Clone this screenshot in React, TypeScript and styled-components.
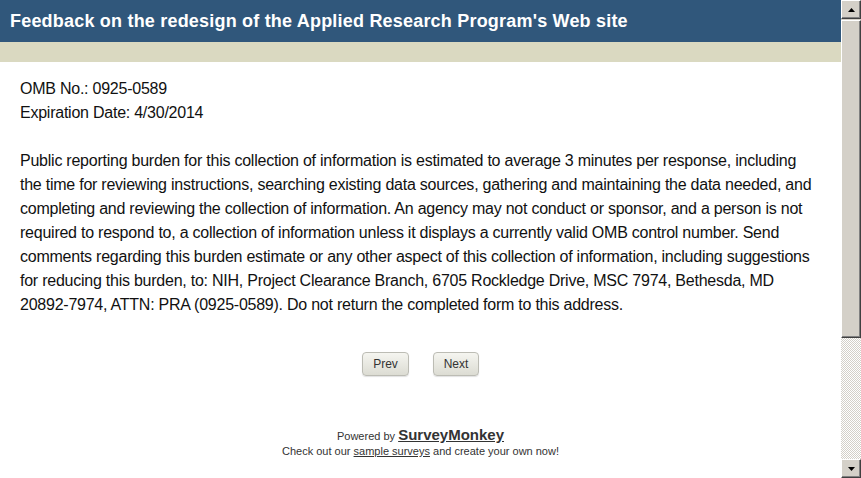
import React from "react";
import styled, { createGlobalStyle } from "styled-components";

const Global = createGlobalStyle`
  html, body { margin: 0; padding: 0; background: #fff; }
  body { font-family: "Liberation Sans", Arial, sans-serif; overflow: hidden; }
`;

const Window = styled.div`
  display: flex;
  width: 861px;
  height: 478px;
  overflow: hidden;
`;

const Page = styled.div`
  flex: 1;
  display: flex;
  flex-direction: column;
  min-width: 0;
  & > * { flex-shrink: 0; }
`;

const Header = styled.div`
  height: 42px;
  background: #30577b;
  display: flex;
  align-items: center;
  padding: 0 10px;
  box-sizing: border-box;
`;

const Title = styled.h1`
  margin: 0;
  color: #fff;
  font-size: 18px;
  font-weight: bold;
  letter-spacing: 0.2px;
`;

const Band = styled.div`
  height: 20px;
  background: #dad9c1;
`;

const Body = styled.div`
  padding: 15px 20px 0 20px;
  color: #111;
  font-size: 16px;
  line-height: 24px;
  letter-spacing: -0.24px;
`;

const Para = styled.p`
  margin: 0 0 24px 0;
`;

const Nav = styled.div`
  display: flex;
  justify-content: center;
  gap: 24px;
  margin-top: 11px;
`;

const NavButton = styled.button<{ $w: number }>`
  width: ${(p) => p.$w}px;
  height: 24px;
  border: 1px solid #bcbcb4;
  border-radius: 4px;
  background: linear-gradient(#f5f5f0, #dcdcd3);
  box-shadow: 0 1px 1px rgba(0, 0, 0, 0.12);
  font-family: "Liberation Sans", Arial, sans-serif;
  font-size: 12px;
  color: #333;
  padding: 0;
`;

const Footer = styled.div`
  margin-top: 51px;
  text-align: center;
  color: #333;
  font-size: 11px;
  line-height: 15px;
`;

const Brand = styled.a`
  color: #333;
  font-size: 15px;
  font-weight: bold;
  text-decoration: underline;
`;

const Link = styled.a`
  color: #333;
  text-decoration: underline;
`;

const Scrollbar = styled.div`
  width: 20px;
  display: flex;
  flex-direction: column;
  background: #d4d0c8;
`;

const ScrollButton = styled.div`
  height: 19px;
  flex-shrink: 0;
  box-sizing: border-box;
  background: #d4d0c8;
  border-top: 1px solid #fff;
  border-left: 1px solid #fff;
  border-right: 1px solid #404040;
  border-bottom: 1px solid #404040;
  box-shadow: inset -1px -1px 0 #808080;
  display: flex;
  align-items: center;
  justify-content: center;
`;

const Thumb = styled(ScrollButton)`
  height: 318px;
  margin-top: 1px;
`;

const Track = styled.div`
  flex: 1;
  background-color: #fff;
  background-image: repeating-conic-gradient(#d4d0c8 0 25%, #fff 0 50%);
  background-size: 2px 2px;
`;

const Arrow = ({ down }: { down?: boolean }) => (
  <svg width="7" height="4" viewBox="0 0 7 4">
    <polygon points={down ? "0,0 7,0 3.5,4" : "0,4 7,4 3.5,0"} fill="#000" />
  </svg>
);

export default function App() {
  return (
    <Window>
      <Global />
      <Page>
        <Header>
          <Title>Feedback on the redesign of the Applied Research Program's Web site</Title>
        </Header>
        <Band />
        <Body>
          <Para>
            OMB No.: 0925-0589
            <br />
            Expiration Date: 4/30/2014
          </Para>
          <Para>
            Public reporting burden for this collection of information is estimated to average 3 minutes per
            response, including the time for reviewing instructions, searching existing data sources, gathering
            and maintaining the data needed, and completing and reviewing the collection of information. An
            agency may not conduct or sponsor, and a person is not required to respond to, a collection of
            information unless it displays a currently valid OMB control number. Send comments regarding this
            burden estimate or any other aspect of this collection of information, including suggestions for
            reducing this burden, to: NIH, Project Clearance Branch, 6705 Rockledge Drive, MSC 7974, Bethesda,
            MD 20892-7974, ATTN: PRA (0925-0589). Do not return the completed form to this address.
          </Para>
        </Body>
        <Nav>
          <NavButton $w={47}>Prev</NavButton>
          <NavButton $w={46}>Next</NavButton>
        </Nav>
        <Footer>
          Powered by <Brand href="#">SurveyMonkey</Brand>
          <br />
          Check out our <Link href="#">sample surveys</Link> and create your own now!
        </Footer>
      </Page>
      <Scrollbar>
        <ScrollButton>
          <Arrow />
        </ScrollButton>
        <Thumb />
        <Track />
        <ScrollButton>
          <Arrow down />
        </ScrollButton>
      </Scrollbar>
    </Window>
  );
}
